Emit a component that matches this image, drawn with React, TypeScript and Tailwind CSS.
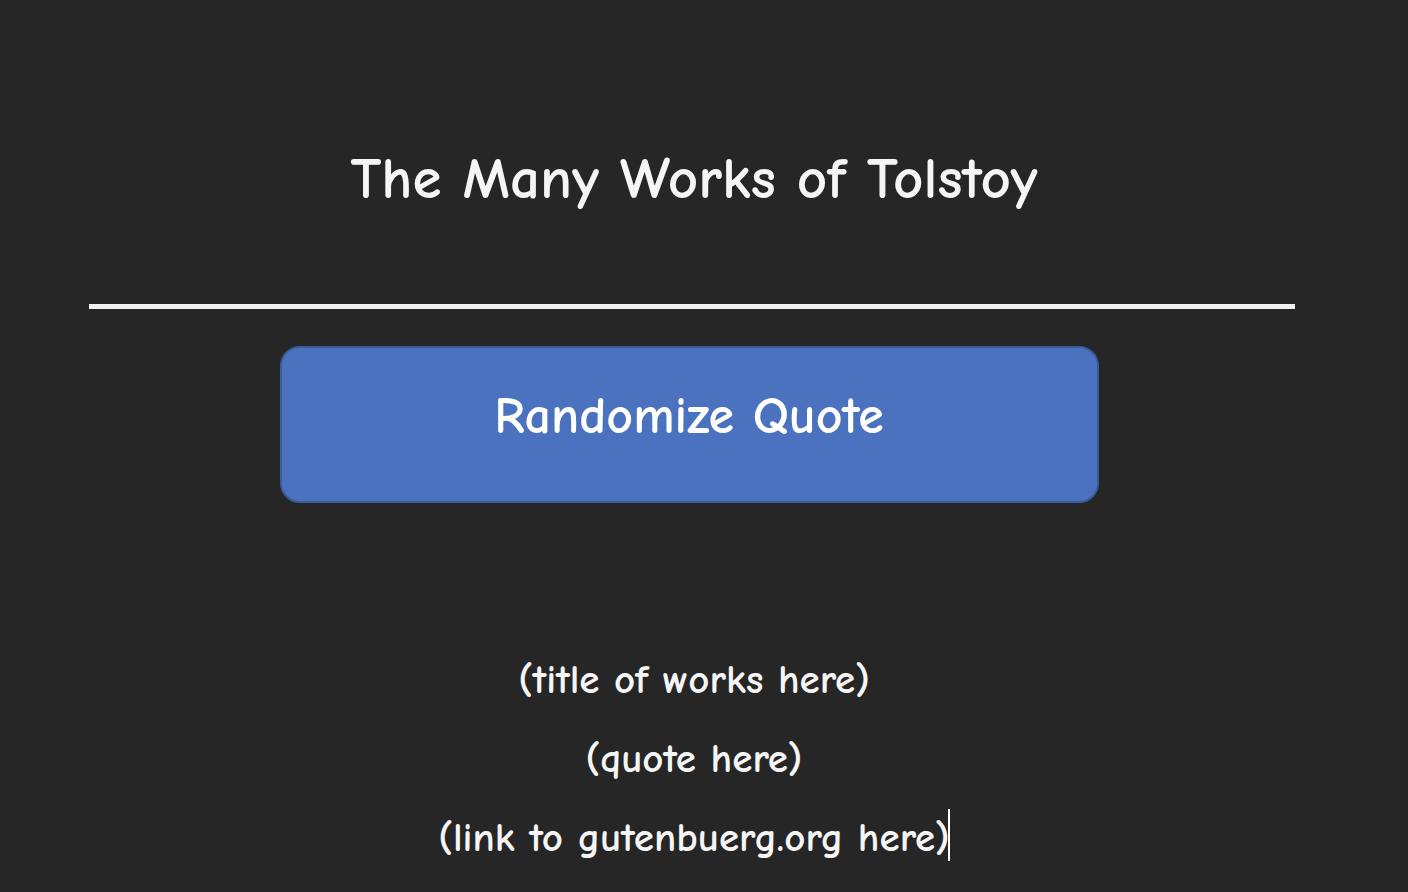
export default function App() {
  const font = { fontFamily: '"Comic Sans MS", "Comic Neue", "DejaVu Sans", sans-serif' }

  return (
    <div className="min-h-screen w-full bg-[#262626] pr-[20px] text-[#f5f5f5]" style={font}>
      <div className="flex flex-col items-center">
        {/* Heading */}
        <h1 className="mt-[141px] h-[76px] text-[59px] font-bold leading-[76px]">The Many Works of Tolstoy</h1>

        {/* Divider */}
        <div className="mt-[87px] h-[5px] w-[1206px] -translate-x-[2px] bg-[#f2f2f2]" />

        {/* Button */}
        <button
          type="button"
          className="mt-[37px] flex h-[157px] w-[819px] -translate-x-[5px] items-center justify-center rounded-[20px] border-2 border-[#3a5c9a] bg-[#4b72be] pb-[18px] text-[52px] font-bold text-white"
          style={font}
        >
          Randomize Quote
        </button>

        {/* Quote block */}
        <div className="mt-[137px] flex flex-col items-center text-[41px] font-bold leading-[79px]">
          <p>(title of works here)</p>
          <p>(quote here)</p>
          <p className="relative">
            (link to gutenbuerg.org here)
            <span className="absolute right-[0px] top-[11px] h-[52px] w-[2px] bg-white" />
          </p>
        </div>
      </div>
    </div>
  )
}
